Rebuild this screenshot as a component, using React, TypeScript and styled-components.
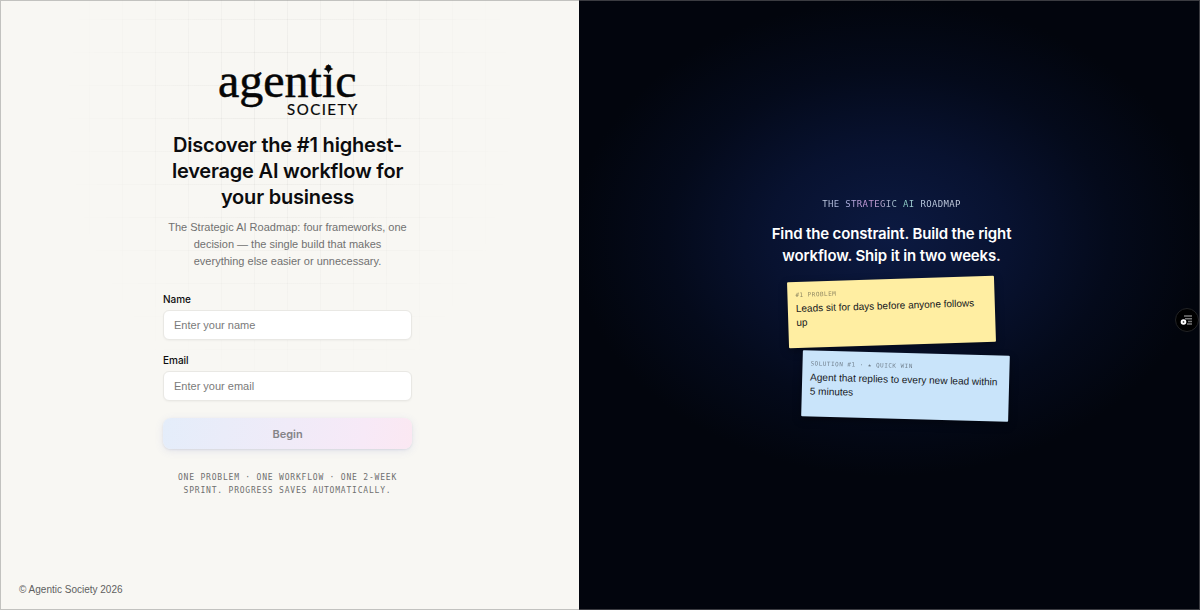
import React from "react";
import styled, { createGlobalStyle } from "styled-components";

const DISPLAY = `Inter, "Liberation Sans", sans-serif`;
const SANS = `"Liberation Sans", Arial, sans-serif`;
const MONO = `"DejaVu Sans Mono", monospace`;

const GlobalStyle = createGlobalStyle`
  *, *::before, *::after { box-sizing: border-box; }
  body { margin: 0; font-family: ${SANS}; -webkit-font-smoothing: antialiased; }
  h1, h2, p { margin: 0; }
`;

const Page = styled.div`
  position: relative;
  display: grid;
  grid-template-columns: 579fr 621fr;
  min-height: 100vh;

  &::after {
    content: "";
    position: absolute;
    inset: 0;
    border: 1px solid rgba(128, 128, 128, 0.45);
    pointer-events: none;
  }
`;

const FormPanel = styled.main`
  position: relative;
  display: flex;
  flex-direction: column;
  padding: 0 23px 12px 19px;
  background: #f8f7f3;
  color: #0c0c0e;

  &::before {
    content: "";
    position: absolute;
    inset: 0;
    background-image:
      linear-gradient(to right, rgba(10, 10, 20, 0.035) 1px, transparent 1px),
      linear-gradient(to bottom, rgba(10, 10, 20, 0.035) 1px, transparent 1px);
    background-size: 33px 33px;
    background-position: 23px 19px;
    mask-image: radial-gradient(ellipse 40% 50% at 50% 18%, #000 20%, transparent 100%);
  }
`;

const FormArea = styled.div`
  position: relative;
  flex: 1;
  display: flex;
  flex-direction: column;
  align-items: center;
  justify-content: center;
  padding-bottom: 32px;
`;

const Column = styled.div`
  width: 100%;
  max-width: 249px;
  display: flex;
  flex-direction: column;
  align-items: center;
  text-align: center;
`;

const Logo = styled.svg`
  display: block;
  width: 144px;
  height: 66px;
`;

const Title = styled.h1`
  margin-top: 13px;
  font-family: ${DISPLAY};
  font-size: 20px;
  line-height: 26px;
  font-weight: 600;
  letter-spacing: -0.01em;
`;

const Lead = styled.p`
  max-width: 240px;
  margin-top: 9px;
  font-size: 11px;
  line-height: 17px;
  color: #717171;
`;

const Form = styled.form`
  width: 100%;
  margin-top: 22px;
  display: flex;
  flex-direction: column;
  gap: 17px;
`;

const Fields = styled.div`
  display: flex;
  flex-direction: column;
  gap: 13px;
`;

const Field = styled.div`
  display: flex;
  flex-direction: column;
  gap: 4px;
  text-align: left;
`;

const Label = styled.label`
  font-family: ${DISPLAY};
  font-size: 10px;
  line-height: 14px;
  font-weight: 500;
`;

const Input = styled.input`
  width: 100%;
  height: 30px;
  padding: 0 10px;
  border: 1px solid #e9e8e4;
  border-radius: 6px;
  background: #fff;
  box-shadow: 0 1px 2px rgba(0, 0, 0, 0.04);
  font: 400 11px/16px ${SANS};
  color: #0c0c0e;

  &::placeholder { color: #7a7a7a; opacity: 1; }
`;

const Submit = styled.button`
  height: 31px;
  border: 0;
  border-radius: 8px;
  background: linear-gradient(100deg, #e4edfa 0%, #f0ebf8 50%, #f7e9f7 80%, #fbe8f2 100%);
  box-shadow: 0 2px 8px rgba(90, 110, 190, 0.13), 0 1px 2px rgba(60, 70, 120, 0.1);
  font: 600 11px/16px ${DISPLAY};
  color: #858488;
`;

const Note = styled.p`
  margin-top: 22px;
  font: 400 8px/13px ${MONO};
  letter-spacing: 0.1em;
  text-transform: uppercase;
  color: #6f6f6f;
`;

const Footer = styled.footer`
  position: relative;
  font-size: 10px;
  line-height: 16px;
  color: #5f5f5f;
`;

const Showcase = styled.section`
  display: flex;
  flex-direction: column;
  align-items: center;
  justify-content: center;
  padding: 6px 0 0 4px;
  background:
    radial-gradient(ellipse 51% 39% at 50% 39%, #0c1a42 0%, #081230 38%, #040a1b 70%, transparent 100%),
    #02050d;
  color: #fff;
  text-align: center;
`;

const Eyebrow = styled.p`
  font: 400 9px/13px ${MONO};
  letter-spacing: 0.04em;
  text-transform: uppercase;
  color: transparent;
  background: linear-gradient(90deg, #c9d3e6 0%, #a9b4e0 16%, #cf9bdc 33%, #b8a6cf 43%, #8fd3c8 60%, #b9cbe0 70%, #cdd3e4 100%);
  background-clip: text;
  -webkit-background-clip: text;
`;

const Headline = styled.h2`
  max-width: 250px;
  margin-top: 12px;
  font-family: ${DISPLAY};
  font-size: 15px;
  line-height: 22px;
  font-weight: 600;
  letter-spacing: -0.01em;
`;

const Notes = styled.div`
  display: flex;
  flex-direction: column;
  gap: 8px;
  width: 207px;
  margin-top: 12px;
`;

const Sticky = styled.article<{ $color: string; $tilt: number; $indent?: number }>`
  width: 207px;
  min-height: 66px;
  margin-left: ${(p) => p.$indent ?? 0}px;
  padding: 8px;
  border-radius: 1px;
  background: ${(p) => p.$color};
  box-shadow: 0 3px 8px rgba(0, 0, 0, 0.35);
  transform: rotate(${(p) => p.$tilt}deg);
  text-align: left;
  color: #16181c;
`;

const StickyTag = styled.p`
  font: 400 6px/10px ${MONO};
  letter-spacing: 0.08em;
  text-transform: uppercase;
  opacity: 0.5;
`;

const StickyText = styled.p`
  margin-top: 2px;
  font-size: 10px;
  line-height: 14px;
`;

const SideTab = styled.button`
  position: absolute;
  right: 1px;
  top: 308px;
  width: 24px;
  height: 24px;
  padding: 0;
  display: grid;
  place-items: center;
  border: 1px solid #222326;
  border-radius: 50%;
  background: #000;
`;

function AgenticLogo() {
  return (
    <Logo viewBox="0 0 144 66" role="img" aria-label="Agentic Society">
      <text x="2" y="44" fontFamily='"Liberation Serif", serif' fontSize="48" fill="#060606" stroke="#060606" strokeWidth="0.5">
        agentic
      </text>
      <path d="M112.500 11 L114 14.500 L117.500 16 L114 17.500 L112.500 21 L111 17.500 L107.500 16 L111 14.500 Z" fill="#060606" />
      <text x="71" y="62" fontFamily="Lato, sans-serif" fontSize="15" letterSpacing="1.5" fill="#060606" stroke="#060606" strokeWidth="0.2">
        SOCIETY
      </text>
    </Logo>
  );
}

export default function App() {
  return (
    <>
      <GlobalStyle />
      <Page>
        <FormPanel>
          <FormArea>
            <Column>
              <AgenticLogo />
              <Title>Discover the #1 highest-leverage AI workflow for your business</Title>
              <Lead>
                The Strategic AI Roadmap: four frameworks, one decision — the single build that makes
                everything else easier or unnecessary.
              </Lead>
              <Form onSubmit={(e) => e.preventDefault()}>
                <Fields>
                  <Field>
                    <Label htmlFor="name">Name</Label>
                    <Input id="name" type="text" placeholder="Enter your name" />
                  </Field>
                  <Field>
                    <Label htmlFor="email">Email</Label>
                    <Input id="email" type="email" placeholder="Enter your email" />
                  </Field>
                </Fields>
                <Submit type="submit">Begin</Submit>
              </Form>
              <Note>One problem · One workflow · One 2-week sprint. Progress saves automatically.</Note>
            </Column>
          </FormArea>
          <Footer>© Agentic Society 2026</Footer>
        </FormPanel>

        <Showcase>
          <Eyebrow>The Strategic AI Roadmap</Eyebrow>
          <Headline>Find the constraint. Build the right workflow. Ship it in two weeks.</Headline>
          <Notes>
            <Sticky $color="#ffeea2" $tilt={-1.8}>
              <StickyTag>#1 Problem</StickyTag>
              <StickyText>Leads sit for days before anyone follows up</StickyText>
            </Sticky>
            <Sticky $color="#c9e4fa" $tilt={1.5} $indent={14}>
              <StickyTag>Solution #1 · ★ Quick win</StickyTag>
              <StickyText>Agent that replies to every new lead within 5 minutes</StickyText>
            </Sticky>
          </Notes>
        </Showcase>

        <SideTab type="button" aria-label="Open panel">
          <svg width="14" height="12" viewBox="0 0 14 12">
            <path d="M4 2h8M5 4.700h7M8 7.400h4M7 10h5" stroke="#777" strokeWidth="1.500" />
            <circle cx="3.500" cy="8" r="2.800" fill="#fff" />
            <circle cx="3.500" cy="8" r="0.900" fill="#555" />
          </svg>
        </SideTab>
      </Page>
    </>
  );
}
